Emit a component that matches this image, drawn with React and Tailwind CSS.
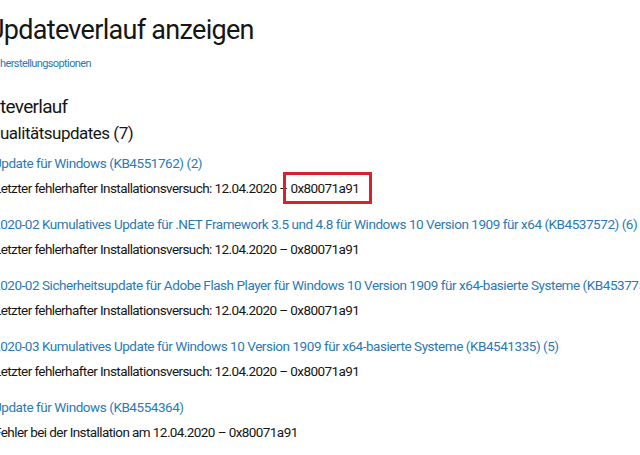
import React from "react";

const font = { fontFamily: 'Roboto, "Noto Sans", sans-serif' };

function Item({ title, detail, red }) {
  return (
    <div className="flex flex-col">
      <div className="h-[20px] leading-[20px] text-[13.5px] tracking-[-0.45px] text-[#2b79b5] whitespace-nowrap -ml-[7px]">{title}</div>
      <div className="mt-[5px] h-[20px] leading-[20px] text-[13.5px] tracking-[-0.58px] text-[#161616] whitespace-nowrap -ml-[6px]">
        {red ? (
          <>
            {detail}{" "}–{" "}
            <span className="relative inline-block h-[20px] leading-[20px] align-top">
              0x80071a91
              <span className="absolute -left-[7px] -right-[13px] -top-[6px] -bottom-[6px] border-[3px] border-[#d8232c]"></span>
            </span>
          </>
        ) : (
          <>{detail} – 0x80071a91</>
        )}
      </div>
    </div>
  );
}

export default function App() {
  return (
    <div className="w-[640px] h-[455px] overflow-hidden bg-white" style={font}>
      <div className="pt-[12px] flex flex-col">
        <div className="h-[36px] leading-[36px] text-[27px] tracking-[-0.7px] text-[#161616] whitespace-nowrap -ml-[13px]">Updateverlauf anzeigen</div>
        <div className="mt-[7px] h-[18px] leading-[18px] text-[11px] tracking-[-0.6px] text-[#2b79b5] whitespace-nowrap">herstellungsoptionen</div>
        <div className="mt-[21px] h-[26px] leading-[26px] text-[19px] tracking-[-0.7px] text-[#161616] whitespace-nowrap">teverlauf</div>
        <div className="mt-[1px] h-[24px] leading-[24px] text-[17px] tracking-[-0.5px] text-[#161616] whitespace-nowrap">ualitätsupdates (7)</div>
        <div className="mt-[8px] flex flex-col gap-[16px]">
          <Item title="Update für Windows (KB4551762) (2)" detail="Letzter fehlerhafter Installationsversuch: 12.04.2020" red />
          <Item title="2020-02 Kumulatives Update für .NET Framework 3.5 und 4.8 für Windows 10 Version 1909 für x64 (KB4537572) (6)" detail="Letzter fehlerhafter Installationsversuch: 12.04.2020" />
          <Item title="2020-02 Sicherheitsupdate für Adobe Flash Player für Windows 10 Version 1909 für x64-basierte Systeme (KB4537759) (2)" detail="Letzter fehlerhafter Installationsversuch: 12.04.2020" />
          <Item title="2020-03 Kumulatives Update für Windows 10 Version 1909 für x64-basierte Systeme (KB4541335) (5)" detail="Letzter fehlerhafter Installationsversuch: 12.04.2020" />
          <Item title="Update für Windows (KB4554364)" detail="Fehler bei der Installation am 12.04.2020" />
        </div>
      </div>
    </div>
  );
}
